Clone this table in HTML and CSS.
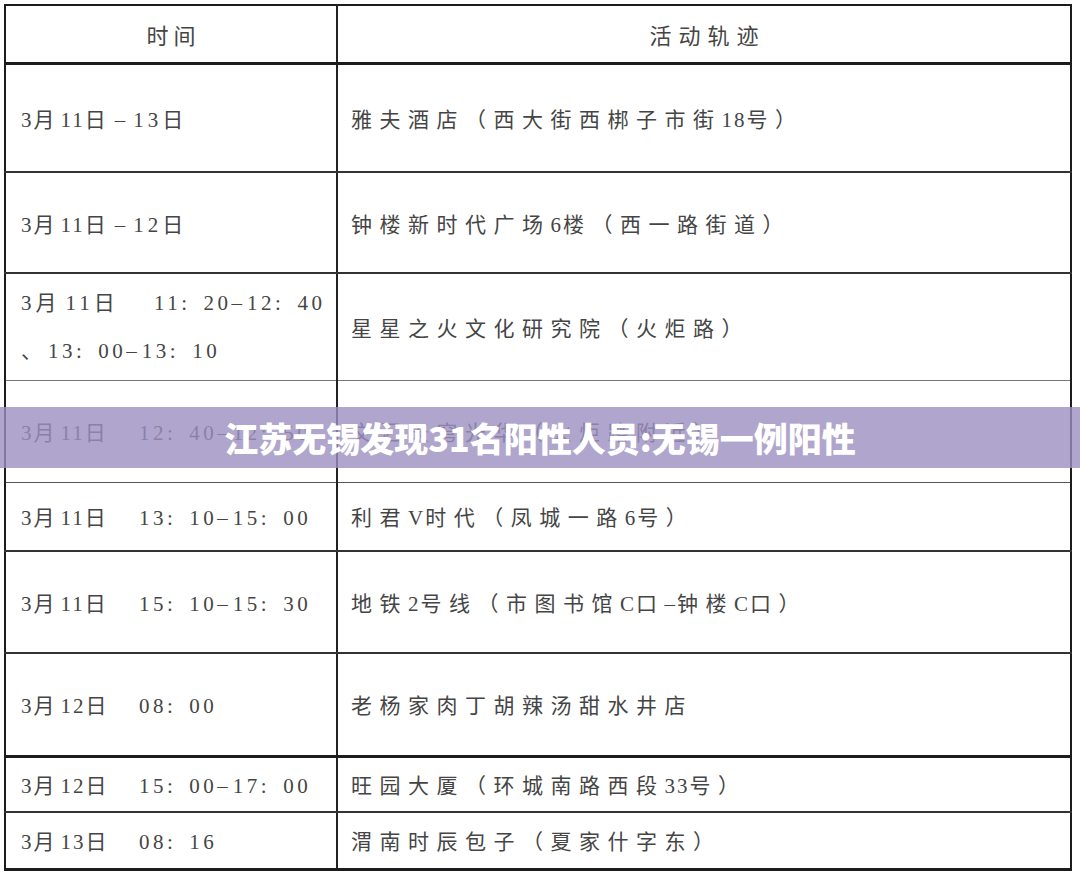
FILE: index.html
```html
<!DOCTYPE html>
<html lang="zh-CN">
<head>
<meta charset="utf-8">
<title>活动轨迹</title>
<link rel="stylesheet" href="styles.css">
</head>
<body>
<div class="page">
  <table class="trace">
    <colgroup><col class="c1"><col class="c2"></colgroup>
    <thead>
      <tr class="r-head">
        <th class="h1">时间</th>
        <th class="h2">活动轨迹</th>
      </tr>
    </thead>
    <tbody>
      <tr class="r1">
        <td class="t"><span class="n">3</span>月<span class="n">11</span>日<span class="rng"><span class="h">–</span>13</span>日</td>
        <td class="p">雅夫酒店（西大街西梆子市街<span class="n">18</span>号）</td>
      </tr>
      <tr class="r2">
        <td class="t"><span class="n">3</span>月<span class="n">11</span>日<span class="rng"><span class="h">–</span>12</span>日</td>
        <td class="p">钟楼新时代广场<span class="n">6</span>楼（西一路街道）</td>
      </tr>
      <tr class="r3">
        <td class="t wide"><span class="dt"><span class="n">3</span>月<span class="n">11</span>日</span><span class="tm">11<span class="k">:</span>20<span class="h">–</span>12<span class="k">:</span>40</span><br>、<span class="tm">13<span class="k">:</span>00<span class="h">–</span>13<span class="k">:</span>10</span></td>
        <td class="p">星星之火文化研究院（火炬路）</td>
      </tr>
      <tr class="r4">
        <td class="t"><span class="dt"><span class="n">3</span>月<span class="n">11</span>日</span><span class="tm">12<span class="k">:</span>40<span class="h">–</span>12<span class="k">:</span>50</span></td>
        <td class="p">文汇天穹光华（火炬路附近）</td>
      </tr>
      <tr class="r5">
        <td class="t"><span class="dt"><span class="n">3</span>月<span class="n">11</span>日</span><span class="tm">13<span class="k">:</span>10<span class="h">–</span>15<span class="k">:</span>00</span></td>
        <td class="p">利君<span class="n">V</span>时代（凤城一路<span class="n">6</span>号）</td>
      </tr>
      <tr class="r6">
        <td class="t"><span class="dt"><span class="n">3</span>月<span class="n">11</span>日</span><span class="tm">15<span class="k">:</span>10<span class="h">–</span>15<span class="k">:</span>30</span></td>
        <td class="p">地铁<span class="n">2</span>号线（市图书馆<span class="n">C</span>口<span class="n">–</span>钟楼<span class="n">C</span>口）</td>
      </tr>
      <tr class="r7">
        <td class="t"><span class="dt"><span class="n">3</span>月<span class="n">12</span>日</span><span class="tm">08<span class="k">:</span>00</span></td>
        <td class="p">老杨家肉丁胡辣汤甜水井店</td>
      </tr>
      <tr class="r8">
        <td class="t"><span class="dt"><span class="n">3</span>月<span class="n">12</span>日</span><span class="tm">15<span class="k">:</span>00<span class="h">–</span>17<span class="k">:</span>00</span></td>
        <td class="p">旺园大厦（环城南路西段<span class="n">33</span>号）</td>
      </tr>
      <tr class="r9">
        <td class="t"><span class="dt"><span class="n">3</span>月<span class="n">13</span>日</span><span class="tm">08<span class="k">:</span>16</span></td>
        <td class="p">渭南时辰包子（夏家什字东）</td>
      </tr>
    </tbody>
  </table>
  <div class="banner">江苏无锡发现31名阳性人员:无锡一例阳性</div>
</div>
</body>
</html>
```

FILE: styles.css
```css
html, body {
  margin: 0;
  padding: 0;
  background: #ffffff;
}

.page {
  width: 1080px;
  height: 877px;
  overflow: hidden;
  padding: 4px 0 0 4px;
  box-sizing: border-box;
}

.trace {
  border-collapse: collapse;
  width: 1068px;
  table-layout: fixed;
  font-family: "Liberation Serif", "Noto Sans CJK SC", serif;
  color: #454545;
  border: 2px solid #1c1c1c;
}

.c1 { width: 332px; }
.c2 { width: auto; }

th, td {
  padding: 0;
  vertical-align: middle;
  border-bottom: 2px solid #333333;
  font-weight: 400;
}

th:first-child, td:first-child {
  border-right: 2px solid #222222;
}

th {
  font-size: 22px;
  text-align: center;
  border-bottom: 3px solid #1c1c1c;
}

.h1 { letter-spacing: 5px; padding-left: 5px; }
.h2 { letter-spacing: 7px; padding-left: 7px; }

.t {
  font-size: 21px;
  letter-spacing: 6px;
  padding-left: 15px;
  white-space: nowrap;
}

.p {
  font-size: 21px;
  letter-spacing: 7.5px;
  padding-left: 13px;
  white-space: nowrap;
}

.n { letter-spacing: 2px; }

.rng { letter-spacing: 4px; }
.rng .h { letter-spacing: 8px; margin-left: 3px; }

.dt {
  display: inline-block;
  width: 118px;
}

.tm { letter-spacing: 3.5px; }
.tm .k { letter-spacing: 16.5px; }
.tm .h { letter-spacing: 5px; }

.wide { line-height: 48px; }
.wide .dt { width: 133px; letter-spacing: 9px; }
.wide .dt .n { letter-spacing: 4px; }

.r-head { height: 58px; }
.r1 { height: 109px; }
.r2 { height: 101px; }
.r3 { height: 107px; }
.r4 { height: 102px; }
.r5 { height: 69px; }
.r6 { height: 102px; }
.r7 { height: 103px; }
.r8 { height: 56px; }
.r9 { height: 57px; }

.r3 td { border-bottom: 1.5px solid #777777; }
.r4 td { border-bottom: 1.5px solid #555555; }
.r7 td { border-bottom: 3px solid #1c1c1c; }
.r9 td { border-bottom: 3px solid #1c1c1c; }

.banner {
  position: absolute;
  left: 0;
  top: 407px;
  width: 1080px;
  height: 61px;
  background: rgba(156, 142, 191, 0.8);
  color: #ffffff;
  font-family: "Noto Sans CJK SC", "Noto Sans", sans-serif;
  font-weight: 900;
  font-size: 34px;
  line-height: 61px;
  text-align: center;
  white-space: nowrap;
}
```
